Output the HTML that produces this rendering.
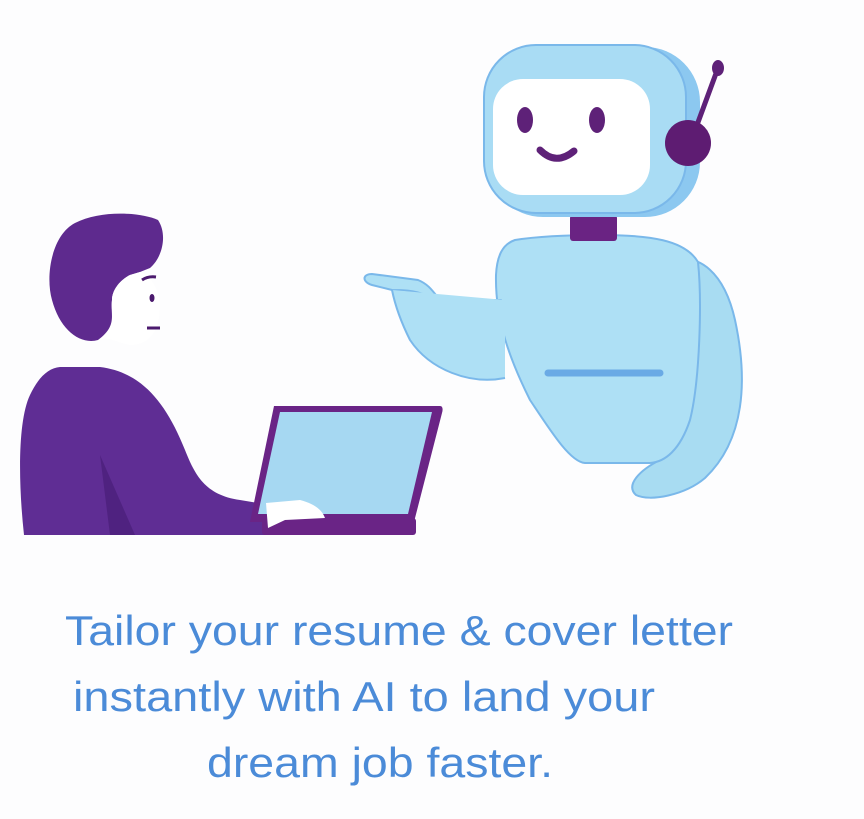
<!DOCTYPE html>
<html><head><meta charset="utf-8"><style>
html,body{margin:0;padding:0;background:#fdfdfe;}
svg{display:block}
</style></head><body>
<svg width="864" height="819" viewBox="0 0 864 819" xmlns="http://www.w3.org/2000/svg">
<rect width="864" height="819" fill="#fdfdfe"/>
<!-- robot right arm (behind) -->
<path d="M668 262 C700 250 725 275 735 320 C748 380 745 440 705 478 C685 495 650 502 636 495 C625 485 640 470 660 460 C690 440 700 400 688 350 C680 320 665 300 668 262 Z" fill="#a8dcf2" stroke="#7ab8ea" stroke-width="2"/>
<!-- body -->
<path d="M515 240 C540 236 570 235 600 235 C650 235 685 240 698 262 C702 300 700 380 690 420 C680 450 665 462 650 463 L585 463 C570 462 550 430 530 400 C510 360 495 320 496 275 C497 255 503 244 515 240 Z" fill="#aee0f5" stroke="#7ab8ea" stroke-width="2"/>
<path d="M548 373 L660 373" stroke="#6aaae5" stroke-width="7" stroke-linecap="round"/>
<!-- left arm pointing -->
<path d="M500 300 C485 320 475 330 462 328 C450 325 440 310 425 295 C415 290 400 290 392 290 L372 285 C362 282 362 274 372 274 L418 280 C428 284 432 290 440 300 C455 315 470 318 490 300 Z" fill="#aee0f5" stroke="#7ab8ea" stroke-width="2"/>
<path d="M392 290 C395 305 400 320 410 340 C430 370 470 385 505 378 L505 300 Z" fill="#aee0f5"/>
<path d="M392 290 C395 305 400 320 410 340 C430 370 470 385 505 378" fill="none" stroke="#7ab8ea" stroke-width="2"/>
<!-- neck -->
<rect x="570" y="215" width="47" height="26" rx="3" fill="#6a2383"/>
<!-- head -->
<rect x="488" y="47" width="212" height="170" rx="55" fill="#8cc8f0"/>
<rect x="484" y="45" width="202" height="168" rx="52" fill="#a9dcf4" stroke="#7ab8ea" stroke-width="2"/>
<rect x="493" y="79" width="157" height="116" rx="30" fill="#ffffff"/>
<ellipse cx="525" cy="120" rx="8" ry="13" fill="#5e2178"/>
<ellipse cx="597" cy="120" rx="8" ry="13" fill="#5e2178"/>
<path d="M540 150 Q556 166 574 151" stroke="#5e2178" stroke-width="7" fill="none" stroke-linecap="round"/>
<!-- antenna & headphone -->
<path d="M697 125 L718 68" stroke="#5e2178" stroke-width="5" stroke-linecap="round"/>
<ellipse cx="718" cy="68" rx="6" ry="8" fill="#5e2178"/>
<circle cx="688" cy="143" r="23" fill="#5e1c72"/>
<!-- man hair/head -->
<path d="M75 223 C100 210 140 212 158 220 C168 235 162 258 150 268 L140 272 L130 275 C120 280 112 290 112 300 C110 315 120 325 98 340 C80 345 60 330 52 300 C45 275 52 235 75 223 Z" fill="#5e2a8e"/>
<path d="M140 272 C150 275 160 290 160 305 C160 330 150 345 130 345 C118 343 105 335 98 340 C118 325 110 315 112 300 C112 290 120 280 130 275 Z" fill="#ffffff"/>
<path d="M142 280 Q148 276 156 277" stroke="#4b1a6e" stroke-width="3" fill="none"/>
<ellipse cx="152" cy="298" rx="2.5" ry="4" fill="#4b1a6e"/>
<path d="M147 328 L160 328" stroke="#4b1a6e" stroke-width="3"/>
<!-- man body -->
<path d="M60 367 L100 367 C140 372 165 400 185 450 C195 475 205 495 240 500 L270 505 L272 535 L24 535 C18 480 18 420 30 395 C38 378 48 368 60 367 Z" fill="#5f2d94"/>
<path d="M100 455 L135 535 L110 535 Z" fill="#4f2280"/>
<!-- laptop -->
<path d="M274 406 L440 406 C443 406 443 410 442 413 L414 522 L250 522 Z" fill="#6a2486"/>
<path d="M280 412 L432 412 L408 514 L258 514 Z" fill="#a6d8f2"/>
<rect x="262" y="518" width="154" height="17" rx="3" fill="#6a2486"/>
<path d="M266 503 L300 500 C315 504 322 510 325 518 L285 520 L268 528 Z" fill="#ffffff"/>
<!-- text -->
<g font-family="Liberation Sans, sans-serif" font-size="42" fill="#4b8bd8">
<text x="65" y="645" textLength="668" lengthAdjust="spacingAndGlyphs">Tailor your resume &amp; cover letter</text>
<text x="73" y="711" textLength="582" lengthAdjust="spacingAndGlyphs">instantly with AI to land your</text>
<text x="207" y="777" textLength="346" lengthAdjust="spacingAndGlyphs">dream job faster.</text>
</g>
</svg>
</body></html>
